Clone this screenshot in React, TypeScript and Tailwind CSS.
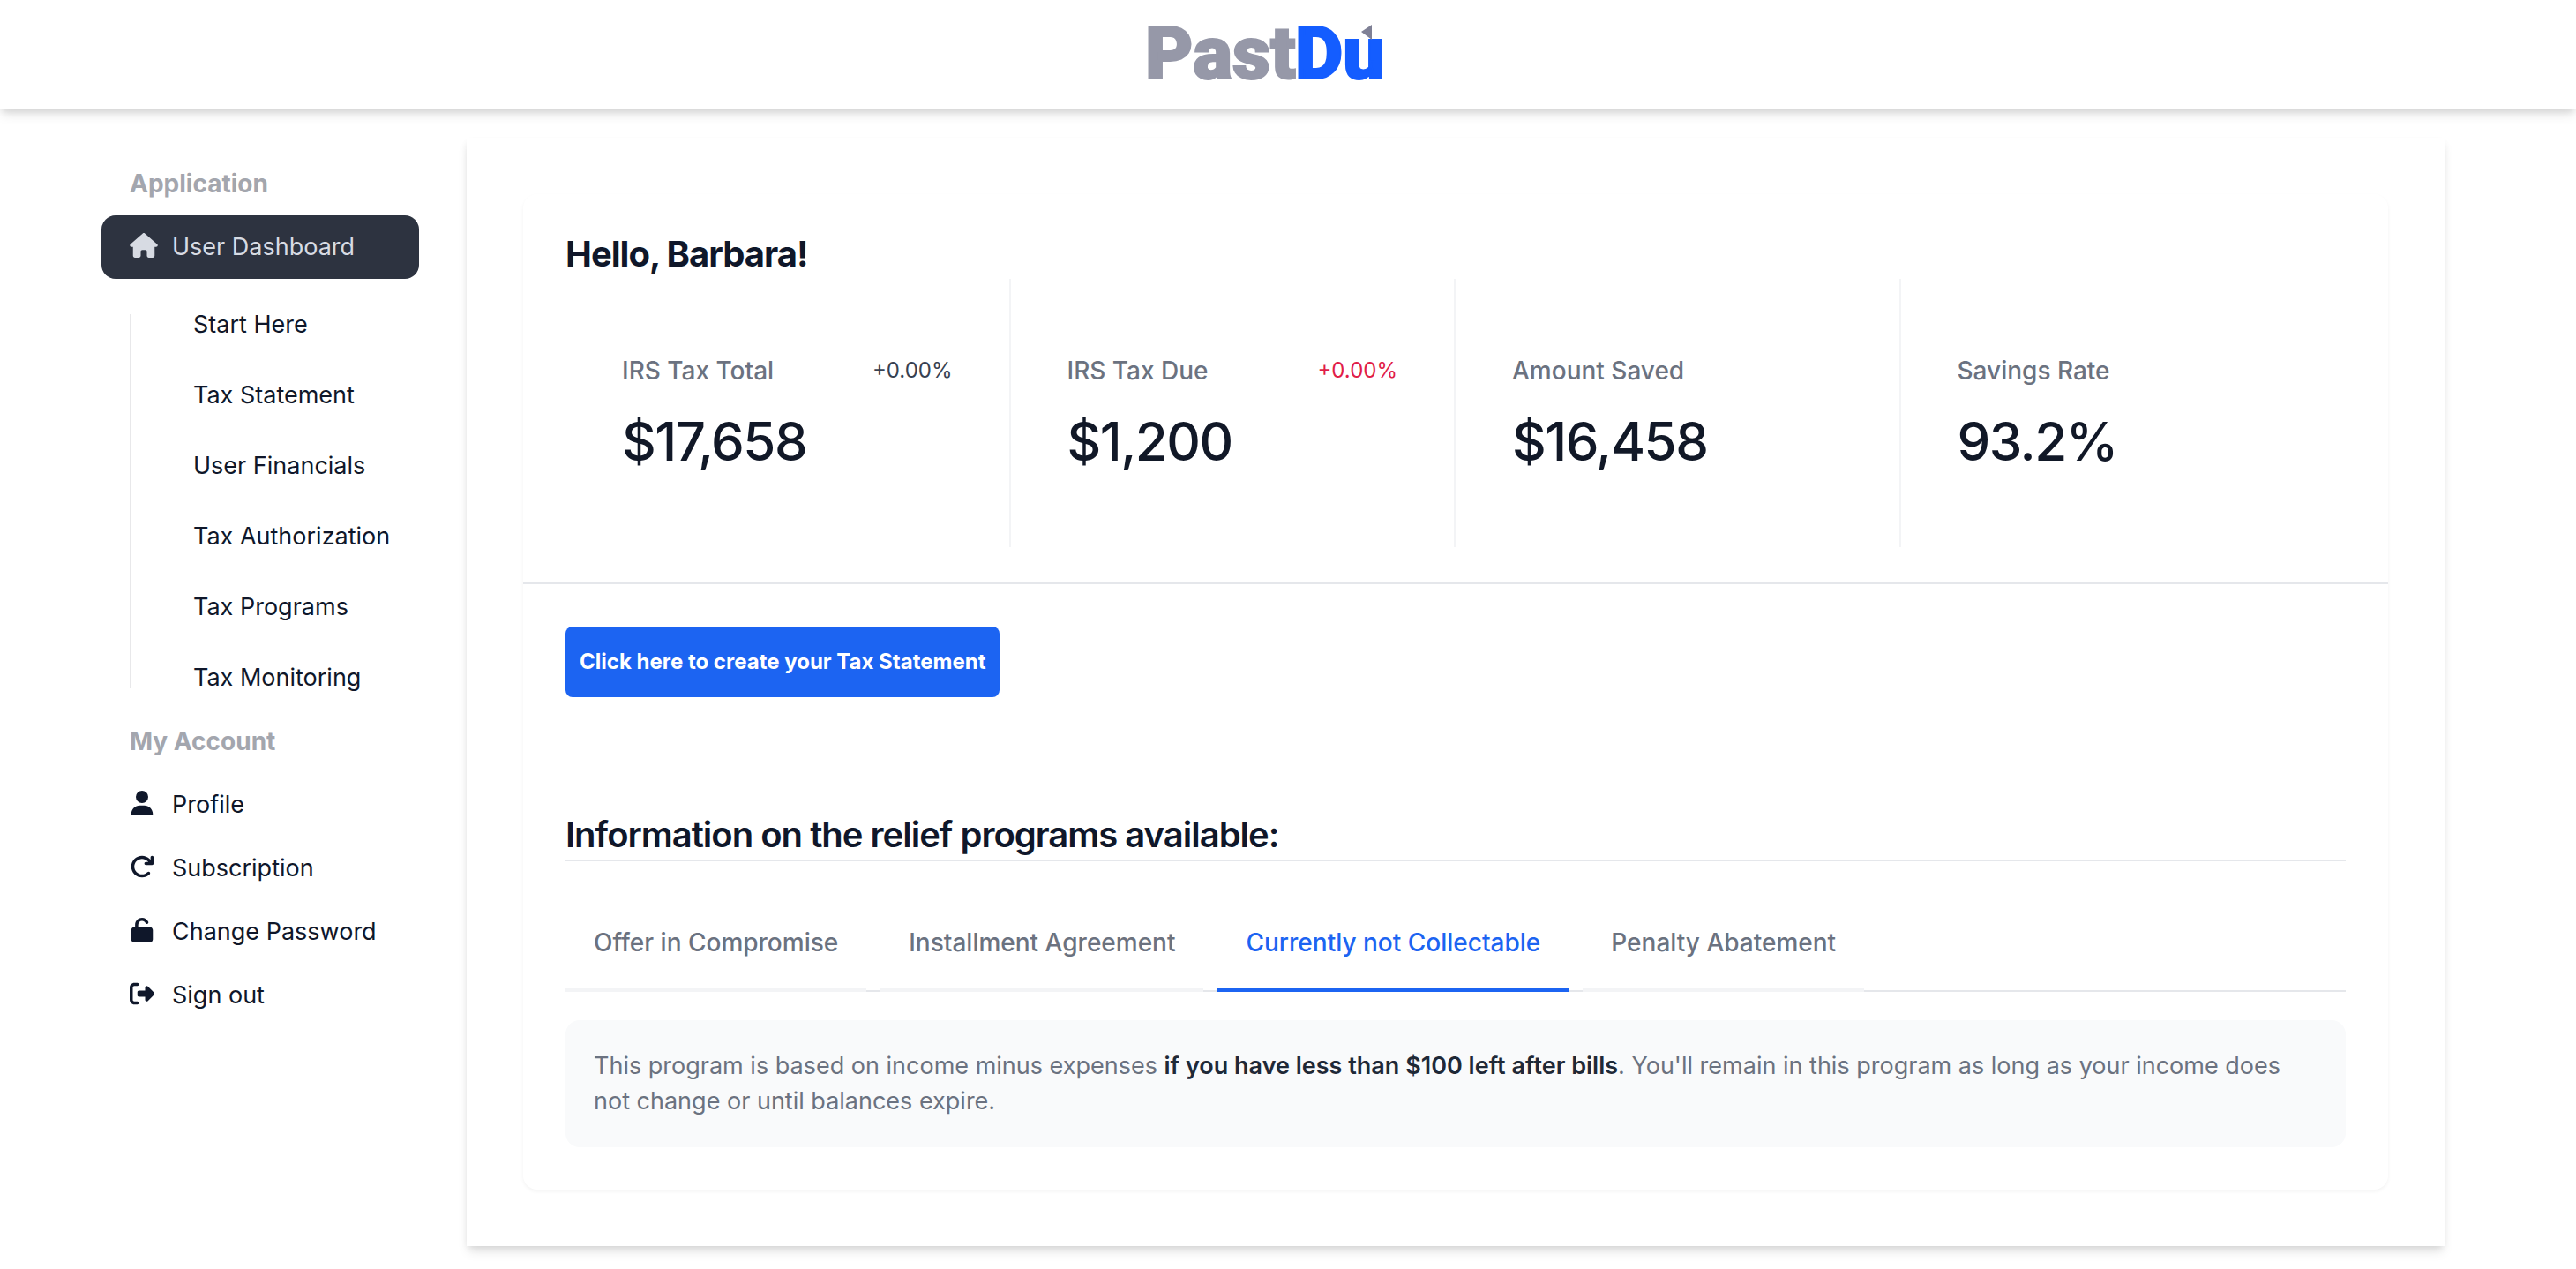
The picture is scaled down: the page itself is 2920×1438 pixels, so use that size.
import React, { useState } from "react";
import { IconType } from "react-icons";
import {
  FaArrowRotateRight,
  FaHouse,
  FaRightFromBracket,
  FaUnlock,
  FaUser,
} from "react-icons/fa6";

interface NavItem {
  name: string;
  link: string;
  icon?: IconType;
}

interface Stat {
  name: string;
  value: string;
  change?: string;
  changeColor?: string;
}

interface Program {
  name: string;
  content: React.ReactNode;
}

const dashboardItems: NavItem[] = [
  { name: "Start Here", link: "#start" },
  { name: "Tax Statement", link: "#statement" },
  { name: "User Financials", link: "#financials" },
  { name: "Tax Authorization", link: "#authorization" },
  { name: "Tax Programs", link: "#programs" },
  { name: "Tax Monitoring", link: "#monitoring" },
];

const accountItems: NavItem[] = [
  { name: "Profile", link: "#profile", icon: FaUser },
  { name: "Subscription", link: "#subscription", icon: FaArrowRotateRight },
  { name: "Change Password", link: "#password", icon: FaUnlock },
  { name: "Sign out", link: "#signout", icon: FaRightFromBracket },
];

const stats: Stat[] = [
  {
    name: "IRS Tax Total",
    value: "$17,658",
    change: "+0.00%",
    changeColor: "text-[#374151]",
  },
  {
    name: "IRS Tax Due",
    value: "$1,200",
    change: "+0.00%",
    changeColor: "text-[#e11d48]",
  },
  { name: "Amount Saved", value: "$16,458" },
  { name: "Savings Rate", value: "93.2%" },
];

const programs: Program[] = [
  { name: "Offer in Compromise", content: null },
  { name: "Installment Agreement", content: null },
  {
    name: "Currently not Collectable",
    content: (
      <>
        This program is based on income minus expenses{" "}
        <strong className="font-semibold text-[#1f2937]">
          if you have less than $100 left after bills
        </strong>
        . You'll remain in this program as long as your income does not change
        or until balances expire.
      </>
    ),
  },
  { name: "Penalty Abatement", content: null },
];

function Logo() {
  return (
    <svg width="280" height="104" viewBox="0 0 280 104" role="img" aria-label="PastDu">
      <g className="font-[Roboto] text-[84px] font-black" strokeWidth="2">
        <text x="2" y="79" fill="#9698a8" stroke="#9698a8">
          Past
        </text>
        <text x="172" y="79" fill="#145dff" stroke="#145dff">
          Du
        </text>
      </g>
      <path d="M259 18v17l-12-9z" fill="#7f8095" />
    </svg>
  );
}

function Header() {
  return (
    <header className="flex h-[124px] items-center justify-center pr-12 shadow-[0_8px_12px_-2px_rgba(0,0,0,0.1),0_4px_8px_-2px_rgba(0,0,0,0.1)]">
      <a href="#home">
        <Logo />
      </a>
    </header>
  );
}

function Sidebar() {
  return (
    <nav className="w-[424px] shrink-0 px-8 pt-4 text-[27px] text-[#0f172a]">
      <div className="flex h-[72px] items-center px-8 text-[28px] font-bold text-[#a3a6ae]">
        Application
      </div>
      <a
        href="#dashboard"
        className="flex h-[72px] items-center rounded-2xl bg-[#2d3340] px-8 text-[#d7dbe3]"
      >
        <div className="w-12">
          <FaHouse className="mb-1 h-7 w-8" />
        </div>
        User Dashboard
      </a>
      <div className="flex pt-4 pl-8">
        <div className="my-6 w-0.5 bg-[#e8e8ea]"></div>
        <ul className="flex flex-col gap-2">
          {dashboardItems.map((item) => (
            <li key={item.name}>
              <a
                href={item.link}
                className="flex h-[72px] items-center pl-[70px] whitespace-nowrap"
              >
                {item.name}
              </a>
            </li>
          ))}
        </ul>
      </div>
      <div className="flex h-[72px] items-center px-8 text-[28px] font-bold text-[#a3a6ae]">
        My Account
      </div>
      <ul>
        {accountItems.map((item) => {
          const Icon = item.icon!;
          return (
            <li key={item.name}>
              <a href={item.link} className="flex h-[72px] items-center px-8">
                <div className="w-12">
                  <Icon className="mb-1 h-7 w-auto" />
                </div>
                {item.name}
              </a>
            </li>
          );
        })}
      </ul>
    </nav>
  );
}

function Stats() {
  return (
    <dl className="grid grid-cols-4">
      {stats.map((stat) => (
        <div
          key={stat.name}
          className="border-r-2 border-[#f3f4f6] px-16 py-20 last:border-r-0"
        >
          <div className="flex h-12 items-center justify-between">
            <dt className="text-[28px] font-medium text-[#6b7280]">
              {stat.name}
            </dt>
            {stat.change && (
              <dd className={"text-[24px] " + stat.changeColor}>
                {stat.change}
              </dd>
            )}
          </div>
          <dd className="mt-4 text-[60px] leading-20 font-medium tracking-tight text-[#111827]">
            {stat.value}
          </dd>
        </div>
      ))}
    </dl>
  );
}

function Programs() {
  const [active, setActive] = useState(2);
  return (
    <div>
      <div className="mt-10 flex border-b-2 border-[#e5e7eb]" role="tablist">
        {programs.map((program, index) => (
          <button
            key={program.name}
            type="button"
            role="tab"
            aria-selected={active === index}
            onClick={() => setActive(index)}
            className={
              "mr-4 -mb-0.5 border-b-4 p-8 text-[28px] leading-10 font-medium " +
              (active === index
                ? "border-[#1c64f2] text-[#1c64f2]"
                : "border-[#f3f4f6] text-[#6b7280]")
            }
          >
            {program.name}
          </button>
        ))}
      </div>
      <div
        role="tabpanel"
        className="mt-8 rounded-2xl bg-[#f9fafb] p-8 text-[27px] leading-10 text-[#6b7280]"
      >
        <p>{programs[active].content}</p>
      </div>
    </div>
  );
}

function App() {
  return (
    <div className="bg-white font-[Inter,sans-serif]">
      <Header />
      <div className="flex pt-8 pr-[149px] pb-[26px] pl-[83px]">
        <Sidebar />
        <main className="ml-[22px] min-w-0 flex-1 bg-white p-16 shadow-[0_8px_12px_-2px_rgba(0,0,0,0.1),0_4px_8px_-2px_rgba(0,0,0,0.1)]">
          <div className="rounded-2xl pb-12 shadow-[0_2px_4px_0_rgba(0,0,0,0.05)]">
            <section className="border-b-2 border-[#e5e7eb] px-12 py-10">
              <h1 className="text-[40px] leading-14 font-bold tracking-tight text-[#0f172a]">
                Hello, Barbara!
              </h1>
              <Stats />
            </section>
            <section className="px-12 pt-12">
              <button
                type="button"
                className="h-20 rounded-lg bg-[#1c64f2] px-4 text-[24px] font-bold text-white"
              >
                Click here to create your Tax Statement
              </button>
              <h2 className="mt-32 border-b-2 border-[#e5e7eb] text-[40px] leading-14 font-semibold tracking-tight text-[#0f172a]">
                Information on the relief programs available:
              </h2>
              <Programs />
            </section>
          </div>
        </main>
      </div>
    </div>
  );
}

export default App;
